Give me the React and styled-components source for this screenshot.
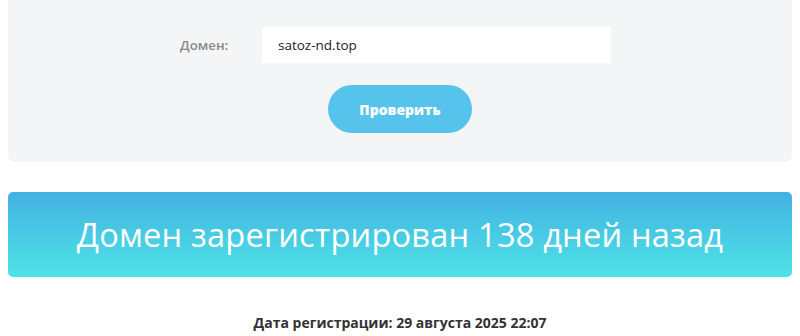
import React, { useState } from "react";
import styled, { createGlobalStyle } from "styled-components";

const GlobalStyle = createGlobalStyle`
  body {
    margin: 0;
    background: #fff;
    font-family: "Open Sans", "DejaVu Sans", sans-serif;
  }
`;

const Page = () => {
  const [domain, setDomain] = useState("satoz-nd.top");

  const domainHandler = e => {
    setDomain(e.target.value);
  };

  return (
    <PageWrapper>
      <GlobalStyle />
      <CheckPanel>
        <FormRow>
          <Label>Домен:</Label>
          <DomainInput type="text" value={domain} onChange={domainHandler} />
        </FormRow>
        <CheckButton>Проверить</CheckButton>
      </CheckPanel>
      <ResultBanner>Домен зарегистрирован 138 дней назад</ResultBanner>
      <RegDate>Дата регистрации: 29 августа 2025 22:07</RegDate>
    </PageWrapper>
  );
};

const PageWrapper = styled.div`
  width: 800px;
  height: 336px;
  padding: 0 8px;
  box-sizing: border-box;
  display: flex;
  flex-direction: column;
  overflow: hidden;
`;

const CheckPanel = styled.div`
  background: #f4f5f7;
  border-radius: 0 0 6px 6px;
  padding: 27px 0 29px;
  display: flex;
  flex-direction: column;
  align-items: center;
`;

const FormRow = styled.div`
  align-self: stretch;
  display: flex;
  align-items: center;
  padding-left: 172px;
`;

const Label = styled.label`
  width: 82px;
  font-size: 13.3px;
  font-weight: 600;
  color: #8a8a8a;
`;

const DomainInput = styled.input`
  width: 349px;
  height: 36px;
  box-sizing: border-box;
  border: none;
  outline: none;
  background: #fff;
  padding: 0 16px;
  font-family: "Open Sans", "DejaVu Sans", sans-serif;
  font-size: 13.5px;
  font-weight: 500;
  color: #222;
`;

const CheckButton = styled.button`
  margin-top: 22px;
  width: 144px;
  height: 48px;
  border: none;
  border-radius: 24px;
  background: #56c3ec;
  color: #fff;
  font-family: "Open Sans", "DejaVu Sans", sans-serif;
  font-size: 14px;
  font-weight: 800;
  &:hover {
    cursor: pointer;
  }
`;

const ResultBanner = styled.div`
  margin-top: 30px;
  height: 85px;
  border-radius: 5px;
  background: linear-gradient(to bottom, #43b2e2, #4de3e6);
  display: flex;
  align-items: center;
  justify-content: center;
  color: #fff;
  font-size: 32.6px;
  font-weight: 400;
  letter-spacing: 0.2px;
`;

const RegDate = styled.div`
  margin-top: 36px;
  text-align: center;
  font-size: 14px;
  font-weight: 700;
  color: #333;
`;

export default Page;
